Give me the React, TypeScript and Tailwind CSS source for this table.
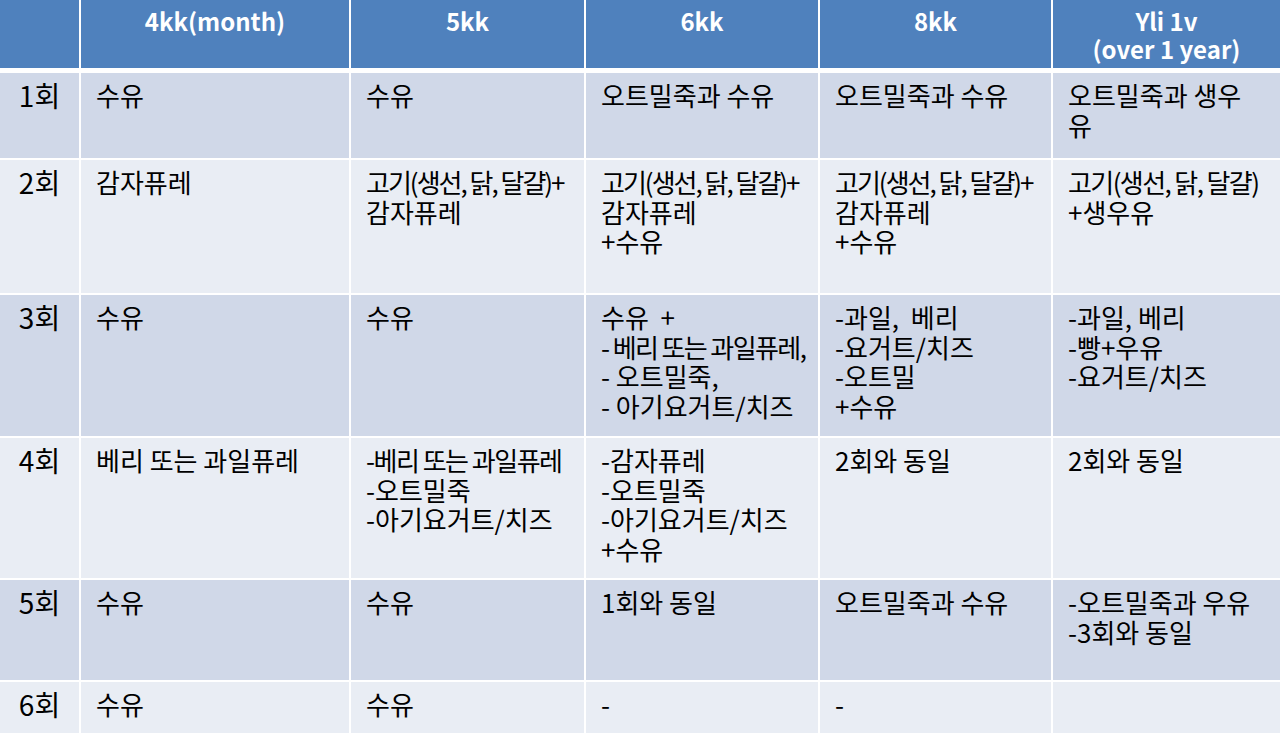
type Cell = string[];

const headers: string[][] = [
	[],
	["4kk(month)"],
	["5kk"],
	["6kk"],
	["8kk"],
	["Yli 1v", "(over 1 year)"],
];

// the slide squeezes a few long lines; tighten them so they stay in the cell
const squeeze: Record<string, string> = {
	"고기(생선, 닭, 달걀)+": "tracking-[-2px]",
	"고기(생선, 닭, 달걀)": "tracking-[-1.6px]",
	"- 베리 또는 과일퓨레,": "tracking-[-1.6px]",
	"-베리 또는 과일퓨레": "tracking-[-1.5px]",
};

const rows: { label: string; height: string; bg: string; cells: Cell[] }[] = [
	{
		label: "1회",
		height: "h-[85px]",
		bg: "bg-[#d0d8e8]",
		cells: [["수유"], ["수유"], ["오트밀죽과 수유"], ["오트밀죽과 수유"], ["오트밀죽과 생우", "유"]],
	},
	{
		label: "2회",
		height: "h-[133px]",
		bg: "bg-[#e9edf4]",
		cells: [
			["감자퓨레"],
			["고기(생선, 닭, 달걀)+", "감자퓨레"],
			["고기(생선, 닭, 달걀)+", "감자퓨레", "+수유"],
			["고기(생선, 닭, 달걀)+", "감자퓨레", "+수유"],
			["고기(생선, 닭, 달걀)", "+생우유"],
		],
	},
	{
		label: "3회",
		height: "h-[141px]",
		bg: "bg-[#d0d8e8]",
		cells: [
			["수유"],
			["수유"],
			["수유  +", "- 베리 또는 과일퓨레,", "- 오트밀죽,", "- 아기요거트/치즈"],
			["-과일,  베리", "-요거트/치즈", "-오트밀", "+수유"],
			["-과일, 베리", "-빵+우유", "-요거트/치즈"],
		],
	},
	{
		label: "4회",
		height: "h-[140px]",
		bg: "bg-[#e9edf4]",
		cells: [
			["베리 또는 과일퓨레"],
			["-베리 또는 과일퓨레", "-오트밀죽", "-아기요거트/치즈"],
			["-감자퓨레", "-오트밀죽", "-아기요거트/치즈", "+수유"],
			["2회와 동일"],
			["2회와 동일"],
		],
	},
	{
		label: "5회",
		height: "h-[100px]",
		bg: "bg-[#d0d8e8]",
		cells: [["수유"], ["수유"], ["1회와 동일"], ["오트밀죽과 수유"], ["-오트밀죽과 우유", "-3회와 동일"]],
	},
	{
		label: "6회",
		height: "h-[51px]",
		bg: "bg-[#e9edf4]",
		cells: [["수유"], ["수유"], ["-"], ["-"], []],
	},
];

const cols = "grid grid-cols-[79px_268px_233px_232px_231px_1fr] gap-x-[2px]";

export default function App() {
	return (
		<div className="w-[1280px] h-[733px] overflow-hidden bg-white font-['Noto_Sans_CJK_KR','Noto_Sans',sans-serif] text-black">
			<div className="flex flex-col gap-y-[2px]">
				{/* header */}
				<div className={`${cols} h-[68px] mb-[3px]`}>
					{headers.map((h, i) => (
						<div
							key={i}
							className="bg-[#4f81bd] pt-[7px] flex flex-col items-center text-white font-bold text-[24px] leading-[28px]"
						>
							{h.map((line) => (
								<span key={line} className="whitespace-nowrap">
									{line}
								</span>
							))}
						</div>
					))}
				</div>

				{rows.map((row) => (
					<div key={row.label} className={`${cols} ${row.height}`}>
						<div className={`${row.bg} pt-[7px] text-center text-[28px] leading-[30px]`}>
							{row.label}
						</div>
						{row.cells.map((cell, i) => (
							<div
								key={i}
								className={`${row.bg} pt-[7px] pl-[15px] flex flex-col text-[26px] leading-[29.5px]`}
							>
								{cell.map((line, j) => (
									<span key={j} className={`whitespace-pre ${squeeze[line] ?? ""}`}>
										{line}
									</span>
								))}
							</div>
						))}
					</div>
				))}
			</div>
		</div>
	);
}
